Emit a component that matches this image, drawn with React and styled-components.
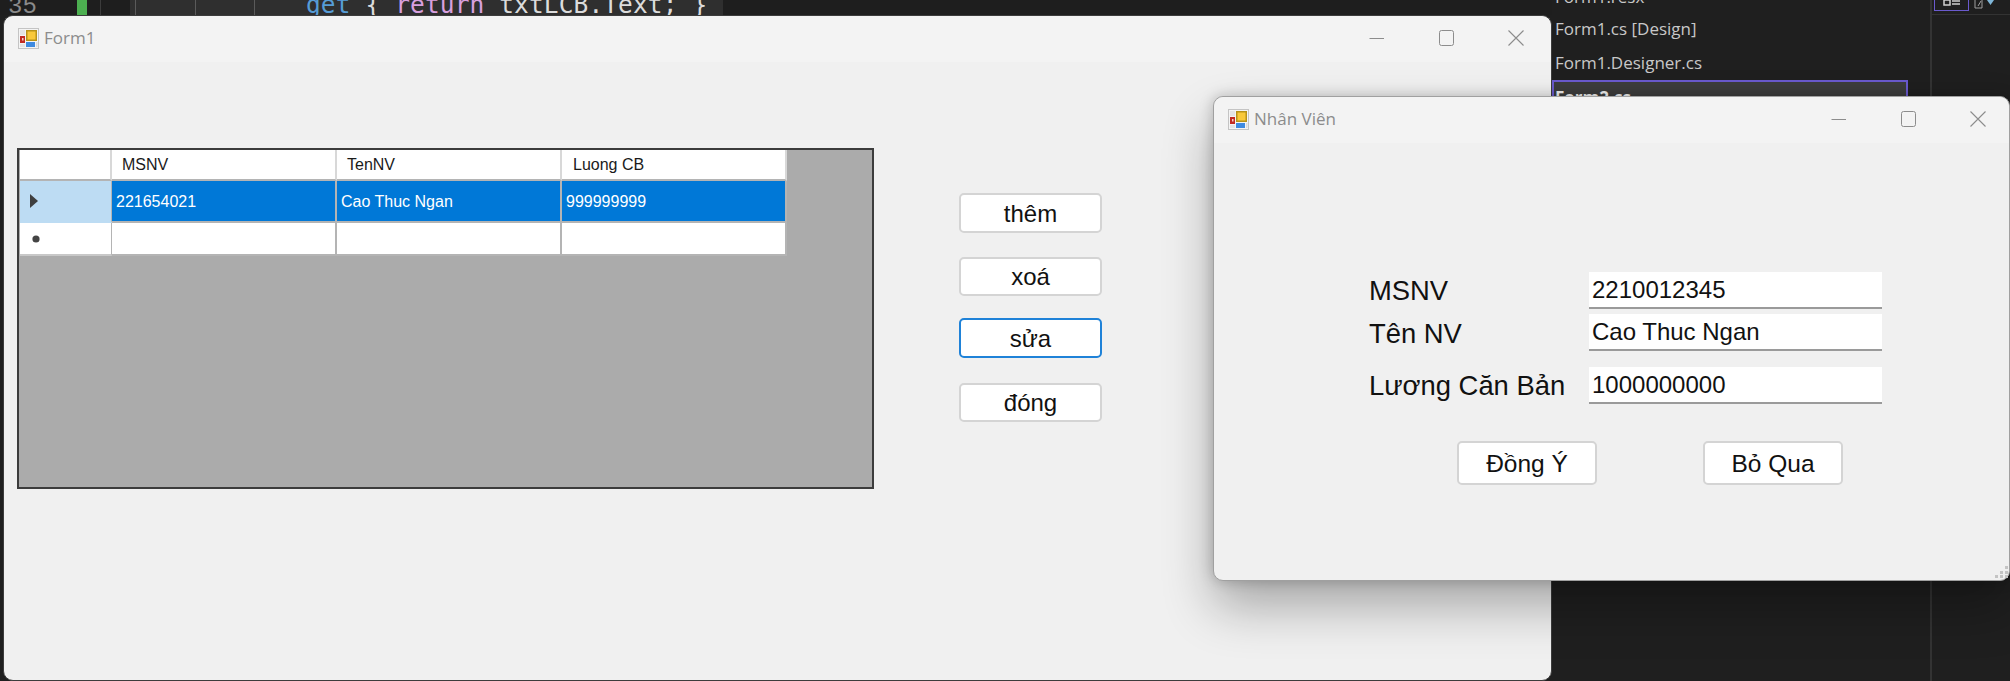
import React from "react";
import styled, { createGlobalStyle } from "styled-components";

const Global = createGlobalStyle`
  html, body { margin: 0; padding: 0; background: #1f1f1f; }
  #root { width: 2010px; height: 681px; overflow: hidden; }
  * { box-sizing: border-box; }
`;

const Desktop = styled.div`
  position: relative;
  width: 2010px;
  height: 681px;
  overflow: hidden;
  background: #1f1f1f;
  display: flex;
  align-items: flex-start;
`;

/* ---------- IDE behind the windows ---------- */
const CodePane = styled.div`
  width: 1552px;
  height: 15px;
  flex: none;
  display: flex;
  overflow: hidden;
  background: #1e1e1e;
`;
const LineNo = styled.div`
  width: 77px;
  flex: none;
  padding-left: 8px;
  font: 24px/14px "Liberation Mono", monospace;
  color: #8a8a8a;
`;
const ChangeBar = styled.div`
  width: 10px;
  flex: none;
  background: #4caf50;
`;
const Margin = styled.div`
  width: 43px;
  flex: none;
  background: linear-gradient(#3c3c3c, #3c3c3c) 13px 0 / 1px 100% no-repeat;
`;
const CodeLine = styled.div`
  width: 593px;
  flex: none;
  padding-left: 176px;
  font: 24.5px/9px "DejaVu Sans Mono", "Liberation Mono", monospace;
  letter-spacing: 0.11px;
  white-space: pre;
  color: #dcdcdc;
  background:
    linear-gradient(#5a5a5a, #5a5a5a) 5px 0 / 1px 100% no-repeat,
    linear-gradient(#5a5a5a, #5a5a5a) 65px 0 / 1px 100% no-repeat,
    linear-gradient(#5a5a5a, #5a5a5a) 124px 0 / 1px 100% no-repeat,
    #2f2f2f;
`;
const Keyword = styled.span`
  color: ${(p) => p.$color};
`;
const Explorer = styled.div`
  width: 380px;
  height: 681px;
  flex: none;
  display: flex;
  flex-direction: column;
  border-right: 2px solid #333;
  color: #c8c8c8;
  font: 17px/34px "Open Sans", "Noto Sans", sans-serif;
`;
const ExplorerRow = styled.div`
  height: ${(p) => p.$h}px;
  width: 356px;
  margin-top: ${(p) => p.$mt || 0}px;
  padding-left: 3px;
  line-height: ${(p) => p.$lh}px;
  ${(p) => p.$selected && `
    overflow: hidden;
    border: 2px solid #6a5acd;
    border-bottom: 0;
    background: #3d3d3d;
    font-weight: 700;
    color: #f0f0f0;
    padding-left: 1px;
  `}
`;
const SidePane = styled.div`
  flex: 1;
  height: 15px;
  display: flex;
  gap: 5px;
  padding-left: 2px;
  border-bottom: 1px solid #333;
`;
const ToolToggle = styled.div`
  width: 35px;
  height: 11px;
  border: 1px solid #6a5acd;
  border-top: 0;
  display: flex;
  justify-content: center;
`;

/* ---------- windows ---------- */
const Window = styled.div`
  position: absolute;
  left: ${(p) => p.$x}px;
  top: ${(p) => p.$y}px;
  width: ${(p) => p.$w}px;
  height: ${(p) => p.$h}px;
  border: 1px solid ${(p) => p.$edge};
  border-radius: 10px;
  overflow: hidden;
  background: #f0f0f0;
  display: flex;
  flex-direction: column;
`;
const ShadowWindow = styled(Window)`
  box-shadow: 0 26px 50px rgba(0, 0, 0, 0.3), 0 0 14px rgba(0, 0, 0, 0.22);
  overflow: visible;
`;
const TitleBar = styled.div`
  height: 46px;
  flex: none;
  display: flex;
  align-items: center;
  padding: 0 0 2px 14px;
  gap: 5px;
  background: #f3f3f3;
  border-radius: 10px 10px 0 0;
`;
const TitleText = styled.span`
  flex: 1;
  margin-top: -2px;
  font: 17px "Open Sans", "Noto Sans", sans-serif;
  color: #8c8c8c;
`;
const Controls = styled.div`
  display: flex;
  flex: none;
  margin-right: ${(p) => p.$right}px;
`;
const Control = styled.div`
  width: 70px;
  height: 44px;
  display: flex;
  align-items: center;
  justify-content: center;
`;

/* ---------- Form1 ---------- */
const Form1Body = styled.div`
  flex: 1;
  display: flex;
  align-items: flex-start;
  padding: 86px 0 0 13px;
`;
const GridView = styled.div`
  width: 857px;
  height: 341px;
  flex: none;
  padding: 0 0 0 1px;
  border: 2px solid #3c3c3c;
  background: #ababab;
  display: grid;
  grid-template-columns: 92px 225px 225px 225px;
  grid-template-rows: 31px 42px 33px;
  align-content: start;
  justify-content: start;
  font: 16px "Liberation Sans", sans-serif;
`;
const HeaderCell = styled.div`
  background: #fff;
  color: #1a1a1a;
  display: flex;
  align-items: center;
  padding: 1px 0 0 ${(p) => p.$pad || 0}px;
  border-right: 2px solid #d8d8d8;
  border-bottom: 2px solid #b4b4b4;
`;
const RowHead = styled.div`
  background: ${(p) => (p.$active ? "#bddcf3" : "#fff")};
  display: flex;
  align-items: center;
  padding-left: ${(p) => p.$pad}px;
  border-right: 1px solid #b4b4b4;
  border-bottom: 2px solid ${(p) => (p.$active ? "#bddcf3" : "#c8c8c8")};
`;
const Cell = styled.div`
  background: ${(p) => (p.$active ? "#0078d7" : "#fff")};
  color: ${(p) => (p.$active ? "#fff" : "#000")};
  display: flex;
  align-items: center;
  padding: 2px 0 0 4px;
  border-right: 2px solid #b4b4b4;
  border-bottom: 2px solid #b4b4b4;
`;
const ActionColumn = styled.div`
  margin-left: 85px;
  padding-top: 45px;
  display: flex;
  flex-direction: column;
  flex: none;
`;
const WinButton = styled.button`
  width: ${(p) => p.$w}px;
  height: ${(p) => p.$h}px;
  margin-top: ${(p) => p.$mt || 0}px;
  flex: none;
  padding: 1px 0 0;
  background: #fff;
  color: #111;
  border: 2px solid ${(p) => (p.$focus ? "#1f82d8" : "#d4d4d4")};
  border-radius: 5px;
  font: ${(p) => p.$size || 24}px "Liberation Sans", sans-serif;
  text-align: center;
`;

/* ---------- Form2 ---------- */
const Form2Body = styled.div`
  flex: 1;
  position: relative;
  padding: 129px 0 0 155px;
  display: flex;
  flex-direction: column;
  align-items: flex-start;
`;
const FieldRow = styled.div`
  display: grid;
  grid-template-columns: 220px 293px;
  height: 37px;
  margin-top: ${(p) => p.$mt || 0}px;
  align-items: center;
`;
const FieldLabel = styled.label`
  font: 27.4px "Liberation Sans", sans-serif;
  padding-top: ${(p) => p.$dy || 0}px;
  color: #111;
  white-space: nowrap;
`;
const FieldValue = styled.div`
  height: 37px;
  padding: 0 0 0 3px;
  display: flex;
  align-items: center;
  background: #fff;
  border-bottom: 2px solid #9a9a9a;
  font: 24px "Liberation Sans", sans-serif;
  color: #111;
`;
const DialogActions = styled.div`
  display: flex;
  gap: 106px;
  margin: 37px 0 0 88px;
`;
const Grip = styled.svg`
  position: absolute;
  right: 0;
  bottom: 1px;
`;

const AppIcon = () => (
  <svg width="21" height="21" viewBox="0 0 21 21">
    <rect x="0.5" y="0.5" width="20" height="20" fill="#f4f4f4" stroke="#c4c4c4" />
    <rect x="2" y="2" width="5" height="5" fill="#e4e4e4" />
    <rect x="2" y="8" width="5" height="7" fill="#c32b22" />
    <rect x="4" y="10" width="1.5" height="2.5" fill="#f3d0c8" />
    <rect x="2" y="16" width="5" height="3" fill="#e4e4e4" />
    <rect x="8" y="2" width="11" height="11" fill="#b89318" />
    <rect x="9.5" y="3.5" width="8" height="8" fill="#f9c93a" />
    <rect x="8" y="14" width="9" height="5" fill="#3e8ae0" />
    <rect x="18" y="14" width="1.5" height="5" fill="#dcdcdc" />
  </svg>
);

const MinIcon = () => (
  <svg width="16" height="16" viewBox="0 0 16 16">
    <path d="M1.5 8.5H16" stroke="#8c8c8c" strokeWidth="1" fill="none" />
  </svg>
);
const MaxIcon = () => (
  <svg width="16" height="16" viewBox="0 0 16 16">
    <rect x="1.5" y="0.5" width="14" height="15" rx="2" stroke="#8c8c8c" fill="none" />
  </svg>
);
const CloseIcon = () => (
  <svg width="16" height="16" viewBox="0 0 16 16">
    <path d="M0.5 0.5L15.5 15.5M15.5 0.5L0.5 15.5" stroke="#8c8c8c" strokeWidth="1.1" fill="none" />
  </svg>
);

const Title = ({ text, right }) => (
  <TitleBar>
    <AppIcon />
    <TitleText>{text}</TitleText>
    <Controls $right={right}>
      <Control><MinIcon /></Control>
      <Control><MaxIcon /></Control>
      <Control><CloseIcon /></Control>
    </Controls>
  </TitleBar>
);

const columns = [
  { name: "MSNV", pad: 10, value: "221654021" },
  { name: "TenNV", pad: 10, value: "Cao Thuc Ngan" },
  { name: "Luong CB", pad: 11, value: "999999999" },
];

const fields = [
  { label: "MSNV", value: "2210012345", mt: 0, dy: 0 },
  { label: "Tên NV", value: "Cao Thuc Ngan", mt: 5, dy: 3 },
  { label: "Lương Căn Bản", value: "1000000000", mt: 16, dy: 0 },
];

export default function App() {
  return (
    <Desktop>
      <Global />
      <CodePane>
        <LineNo>35</LineNo>
        <ChangeBar />
        <Margin />
        <CodeLine>
          <Keyword $color="#569cd6">get</Keyword>{" { "}
          <Keyword $color="#d8a0df">return</Keyword>{" txtLCB.Text; }"}
        </CodeLine>
      </CodePane>
      <Explorer>
        <ExplorerRow $h={15} $mt={-3} $lh={0}>Form1.resx</ExplorerRow>
        <ExplorerRow $h={34} $lh={34}>Form1.cs [Design]</ExplorerRow>
        <ExplorerRow $h={34} $lh={34}>Form1.Designer.cs</ExplorerRow>
        <ExplorerRow $h={34} $lh={32} $selected>Form2.cs</ExplorerRow>
      </Explorer>
      <SidePane>
        <ToolToggle>
          <svg width="20" height="10" viewBox="0 0 20 10">
            <path d="M2 0h6v5H2zM10 1h8M10 4h8" stroke="#d0d0d0" strokeWidth="1.5" fill="none" />
          </svg>
        </ToolToggle>
        <svg width="22" height="10" viewBox="0 0 22 10">
          <path d="M1 0v8h7V0M4 6l3-5" stroke="#a0a0a0" strokeWidth="1" fill="none" />
          <path d="M13 0h7l-3.5 5z" fill="#7fb6d8" />
        </svg>
      </SidePane>

      <Window $x={3} $y={15} $w={1549} $h={666} $edge="#3c3c3c">
        <Title text="Form1" right={0} />
        <Form1Body>
          <GridView>
            <HeaderCell />
            {columns.map((c) => (
              <HeaderCell key={c.name} $pad={c.pad}>{c.name}</HeaderCell>
            ))}
            <RowHead $active $pad={9}>
              <svg width="10" height="14" viewBox="0 0 10 14">
                <path d="M1 0L9 7L1 14Z" fill="#3f3f3f" />
              </svg>
            </RowHead>
            {columns.map((c) => (
              <Cell key={c.name} $active>{c.value}</Cell>
            ))}
            <RowHead $pad={12}>
              <svg width="8" height="8" viewBox="0 0 8 8">
                <circle cx="4" cy="4" r="3.6" fill="#444" />
              </svg>
            </RowHead>
            {columns.map((c) => (
              <Cell key={c.name} />
            ))}
          </GridView>
          <ActionColumn>
            <WinButton $w={143} $h={40}>thêm</WinButton>
            <WinButton $w={143} $h={39} $mt={24}>xoá</WinButton>
            <WinButton $w={143} $h={40} $mt={22} $focus>sửa</WinButton>
            <WinButton $w={143} $h={39} $mt={25}>đóng</WinButton>
          </ActionColumn>
        </Form1Body>
      </Window>

      <ShadowWindow $x={1213} $y={96} $w={797} $h={485} $edge="#a0a0a0">
        <Title text="Nhân Viên" right={-4} />
        <Form2Body>
          {fields.map((f) => (
            <FieldRow key={f.label} $mt={f.mt}>
              <FieldLabel $dy={f.dy}>{f.label}</FieldLabel>
              <FieldValue>{f.value}</FieldValue>
            </FieldRow>
          ))}
          <DialogActions>
            <WinButton $w={140} $h={44} $size={24.5}>Đồng Ý</WinButton>
            <WinButton $w={140} $h={44} $size={24.5}>Bỏ Qua</WinButton>
          </DialogActions>
          <Grip width="14" height="14" viewBox="0 0 14 14">
            <path d="M10 1h3v3h-3zM5 6h3v3H5zM10 6h3v3h-3zM0 10h3v3H0zM5 10h3v3H5zM10 10h3v3h-3z" fill="#c4c4c4" />
          </Grip>
        </Form2Body>
      </ShadowWindow>
    </Desktop>
  );
}
